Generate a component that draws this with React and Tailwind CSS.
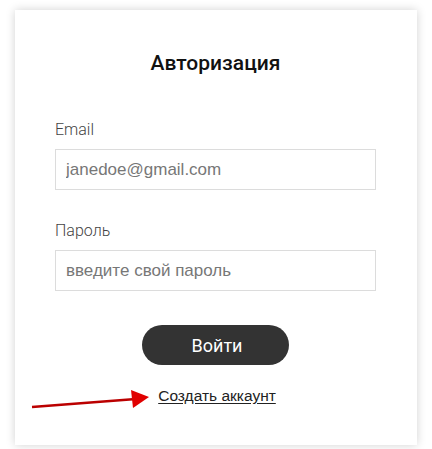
import React from 'react';

const App = () => {
  return (
    <div className="relative w-[432px] h-[449px] bg-white pt-[10px] pl-[15px]">
      <div
        className="relative w-[402px] h-[435px] bg-white shadow-[0_0_9px_rgba(0,0,0,0.18)] flex flex-col pt-[39px] pl-[40px] pr-[41px]"
        style={{ fontFamily: 'Roboto, sans-serif' }}
      >
        <h1 className="h-[28px] leading-[28px] text-[21px] font-medium text-[#111] text-center">Авторизация</h1>

        <label className="mt-[41px] h-[24px] leading-[24px] text-[16px] font-light text-[#444]">Email</label>
        <input
          type="text"
          placeholder="janedoe@gmail.com"
          className="mt-[7px] h-[41px] w-full border border-[#dcdcdc] px-[10px] text-[17px] text-[#777] placeholder:text-[#777] outline-none"
          style={{ fontFamily: '"Liberation Sans", Arial, sans-serif' }}
        />

        <label className="mt-[29px] h-[24px] leading-[24px] text-[16px] font-light text-[#444]">Пароль</label>
        <input
          type="password"
          placeholder="введите свой пароль"
          className="mt-[7px] h-[41px] w-full border border-[#dcdcdc] px-[10px] text-[17px] text-[#777] placeholder:text-[#777] outline-none"
          style={{ fontFamily: '"Liberation Sans", Arial, sans-serif' }}
        />

        <div className="mt-[34px] flex justify-center">
          <button className="w-[147px] h-[40px] rounded-full bg-[#333] text-white text-[18px] pl-[3px]">Войти</button>
        </div>

        <div className="mt-[21px] flex justify-center">
          <a
            href="#"
            className="pl-[3px] h-[20px] leading-[20px] text-[15.5px] text-[#222] underline underline-offset-[2px]"
            style={{ fontFamily: '"Liberation Sans", Arial, sans-serif' }}
          >
            Создать аккаунт
          </a>
        </div>
      </div>

      <svg className="absolute left-0 top-0" width="432" height="449" viewBox="0 0 432 449">
        <line x1="32" y1="407" x2="136" y2="399" stroke="#b00" strokeWidth="2.5" />
        <polygon points="131,390 149,397 133,408" fill="#e00000" />
      </svg>
    </div>
  );
};

export default App;
